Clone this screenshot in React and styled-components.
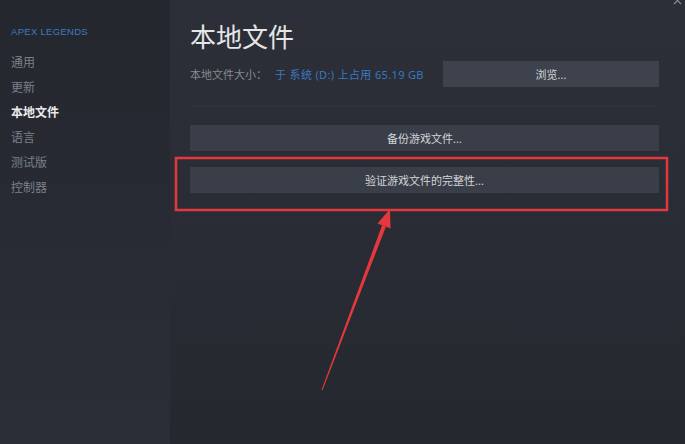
import React from 'react';
import styled, { createGlobalStyle } from 'styled-components';
import { X } from 'lucide-react';

const GlobalStyle = createGlobalStyle`
  html, body {
    margin: 0;
    padding: 0;
    background: #282b33;
  }
  * {
    box-sizing: border-box;
  }
`;

const FONT = `"Noto Sans", "Noto Sans CJK SC", sans-serif`;

const Window = styled.div`
  position: relative;
  display: flex;
  width: 685px;
  height: 444px;
  overflow: hidden;
  font-family: ${FONT};
`;

const Sidebar = styled.nav`
  width: 170px;
  flex-shrink: 0;
  padding: 25px 0 0 11px;
  background: linear-gradient(180deg, #24272e 0%, #282b33 55%, #2b2e36 100%);
  display: flex;
  flex-direction: column;
`;

const GameName = styled.div`
  font-family: "Liberation Sans", ${FONT};
  font-size: 9.5px;
  line-height: 14px;
  color: #3b7cc2;
  letter-spacing: 0.3px;
  margin-bottom: 11px;
`;

const NavItem = styled.div`
  font-size: 12px;
  line-height: 25px;
  color: ${p => (p.$active ? '#e9eaec' : '#7b8089')};
  font-weight: ${p => (p.$active ? 700 : 400)};
`;

const Main = styled.main`
  position: relative;
  flex: 1;
  padding: 23px 26px 0 20px;
  background: linear-gradient(180deg, #2c2f37 0%, #2a2d35 40%, #25282f 100%);
  display: flex;
  flex-direction: column;
`;

const CloseButton = styled.div`
  position: absolute;
  top: -6px;
  right: 1px;
  color: #8d929b;
  display: flex;
`;

const Title = styled.h1`
  margin: 0;
  font-size: 26px;
  line-height: 28px;
  font-weight: 400;
  color: #e4e5e7;
`;

const SizeRow = styled.div`
  display: flex;
  align-items: center;
  margin-top: 10px;
  height: 26px;
  font-size: 11px;
`;

const SizeLabel = styled.span`
  color: #868a92;
  margin-right: 8px;
`;

const SizeValue = styled.span`
  color: #3a78c0;
  letter-spacing: 0.35px;
`;

const Button = styled.div`
  height: 26px;
  display: flex;
  align-items: center;
  justify-content: center;
  background: ${p => (p.$light ? '#3e424c' : '#3a3e48')};
  color: #d3d5d9;
  font-size: 11px;
  ${p => p.$width && `width: ${p.$width}px; margin-left: auto;`}
`;

const Divider = styled.div`
  height: 1px;
  margin: 19px 0 18px;
  background: rgba(255, 255, 255, 0.03);
`;

const Actions = styled.div`
  display: flex;
  flex-direction: column;
  gap: 16px;
`;

const Annotation = styled.svg`
  position: absolute;
  left: 0;
  top: 0;
  pointer-events: none;
`;

const NAV = ['通用', '更新', '本地文件', '语言', '测试版', '控制器'];

export default function App() {
  return (
    <>
      <GlobalStyle />
      <Window>
        <Sidebar>
          <GameName>APEX LEGENDS</GameName>
          {NAV.map(item => (
            <NavItem key={item} $active={item === '本地文件'}>{item}</NavItem>
          ))}
        </Sidebar>

        <Main>
          <CloseButton><X size={13} strokeWidth={2} /></CloseButton>
          <Title>本地文件</Title>
          <SizeRow>
            <SizeLabel>本地文件大小：</SizeLabel>
            <SizeValue>于 系统 (D:) 上占用 65.19 GB</SizeValue>
            <Button $light $width={216}>浏览...</Button>
          </SizeRow>
          <Divider />
          <Actions>
            <Button>备份游戏文件...</Button>
            <Button>验证游戏文件的完整性...</Button>
          </Actions>
        </Main>

        <Annotation width="685" height="444" viewBox="0 0 685 444">
          <rect x="176" y="158" width="491" height="52" fill="none" stroke="#e5383c" strokeWidth="2.5" />
          <polygon points="321.5,390 322.5,390.3 385.9,226.7 382.1,225.3" fill="#e5383c" />
          <polygon points="390,209 377.5,223.5 390.5,228.5" fill="#e5383c" />
        </Annotation>
      </Window>
    </>
  );
}
